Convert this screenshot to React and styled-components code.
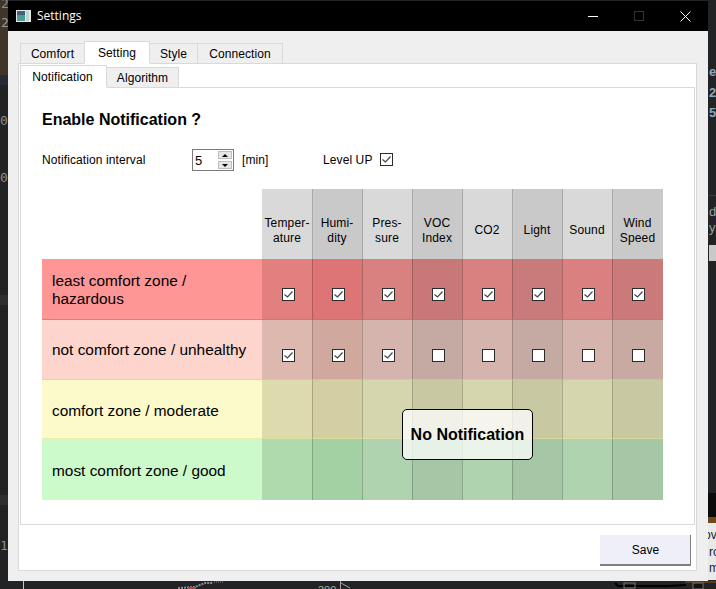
import React from "react";
import styled, { createGlobalStyle } from "styled-components";

const Global = createGlobalStyle`
  html, body { margin: 0; padding: 0; background: #212325; overflow: hidden; }
  body { font-family: "Liberation Sans", Arial, sans-serif; }
`;

const Desktop = styled.div`
  position: relative;
  width: 716px;
  height: 589px;
  box-sizing: border-box;
  padding: 1px 8px 8px;
  overflow: hidden;
  background: #212325;
`;
const BackPatch = styled.div`
  position: absolute;
  left: ${(p) => p.$x}px;
  top: ${(p) => p.$y}px;
  width: ${(p) => p.$w}px;
  height: ${(p) => p.$h}px;
  background: ${(p) => p.$bg};
`;
const BackGlyph = styled.span`
  position: absolute;
  left: ${(p) => p.$x}px;
  top: ${(p) => p.$y}px;
  font-family: ${(p) => (p.$mono ? '"DejaVu Sans Mono", monospace' : '"Liberation Sans", sans-serif')};
  font-size: ${(p) => p.$size || 13}px;
  font-weight: ${(p) => (p.$bold ? 700 : 400)};
  line-height: 14px;
  color: ${(p) => p.$color};
`;
const BottomArt = styled.svg`
  position: absolute;
  left: 0;
  top: 581px;
`;

const Window = styled.div`
  position: relative;
  width: 700px;
  height: 580px;
  display: flex;
  flex-direction: column;
`;
const TitleBar = styled.div`
  height: 30px;
  flex: none;
  background: #000;
  display: flex;
  align-items: center;
  padding-left: 8px;
  color: #fff;
  font-family: "Open Sans", sans-serif;
  font-size: 12px;
`;
const AppIcon = styled.svg`
  margin-right: 6px;
  flex: none;
`;
const TitleText = styled.span`
  flex: 1;
  padding-bottom: 2px;
`;
const WinButton = styled.div`
  width: 46px;
  height: 30px;
  display: flex;
  align-items: center;
  justify-content: center;
`;
const WinControls = styled.div`
  display: flex;
  margin-right: -1px;
  padding-right: 1px;
`;
const Body = styled.div`
  flex: 1;
  background: #efefef;
  padding: 10px 11px 10px 10px;
  display: flex;
  flex-direction: column;
`;
const TabRow = styled.div`
  display: flex;
  align-items: flex-end;
  flex: none;
  height: ${(p) => p.$h}px;
  margin-bottom: -1px;
  padding-left: ${(p) => p.$pad}px;
  position: relative;
  z-index: 1;
`;
const Tab = styled.div`
  box-sizing: border-box;
  width: ${(p) => p.$w}px;
  height: ${(p) => (p.$active ? p.$h : p.$h - 2)}px;
  margin-left: ${(p) => (p.$first ? 0 : -1)}px;
  padding-right: ${(p) => p.$nudge || 0}px;
  display: flex;
  align-items: center;
  justify-content: center;
  font-size: 12px;
  letter-spacing: 0.08px;
  color: #000;
  background: ${(p) => (p.$active ? "#fff" : "#efefef")};
  border: 1px solid #d9d9d9;
  border-bottom: ${(p) => (p.$active ? "1px solid #fff" : "1px solid #d9d9d9")};
  position: relative;
  z-index: ${(p) => (p.$active ? 2 : 1)};
`;
const OuterPane = styled.div`
  flex: 1;
  background: #fff;
  border: 1px solid #d9d9d9;
  padding: 1px;
  display: flex;
  flex-direction: column;
  min-height: 0;
`;
const InnerPane = styled.div`
  box-sizing: border-box;
  height: 438px;
  flex: none;
  background: #fff;
  border: 1px solid #d9d9d9;
  padding: 23px 0 0 21px;
`;
const Heading = styled.h1`
  margin: 0;
  font-size: 16px;
  line-height: 18px;
  font-weight: 700;
  color: #000;
`;
const OptionsRow = styled.div`
  margin-top: 20px;
  height: 22px;
  display: flex;
  align-items: center;
  font-size: 12px;
  letter-spacing: 0.1px;
  color: #000;
`;
const IntervalLabel = styled.span`
  width: 150px;
`;
const Spin = styled.div`
  box-sizing: border-box;
  width: 42px;
  height: 22px;
  border: 1px solid #7a7a7a;
  display: flex;
  align-items: center;
  justify-content: space-between;
  padding: 1px;
  background: #fff;
`;
const SpinValue = styled.span`
  font-size: 13px;
  padding-left: 1px;
`;
const SpinButtons = styled.div`
  display: flex;
  flex-direction: column;
  gap: 2px;
`;
const SpinButton = styled.div`
  box-sizing: border-box;
  width: 14px;
  height: 8px;
  background: #e6e6e6;
  border: 1px solid #bdbdbd;
  display: flex;
  align-items: center;
  justify-content: center;
  &::after {
    content: "";
    width: 0;
    height: 0;
    border-left: 3px solid transparent;
    border-right: 3px solid transparent;
    ${(p) => (p.$up ? "border-bottom: 3px solid #000;" : "border-top: 3px solid #000;")}
  }
`;
const Unit = styled.span`
  margin-left: 8px;
  width: 81px;
`;
const LevelLabel = styled.span`
  width: 57px;
`;
const LevelBox = styled.span`
  display: block;
  margin-top: -1px;
`;
const Box = styled.span`
  box-sizing: border-box;
  width: 13px;
  height: 13px;
  flex: none;
  display: block;
  background: #fff;
  border: 1px solid #2b2b2b;
`;
const CheckMark = styled.svg`
  display: block;
`;
const Table = styled.div`
  position: relative;
  margin-top: 18px;
  width: 621px;
  display: grid;
  grid-template-columns: 220px repeat(7, 50px) 51px;
  grid-template-rows: 70px 61px 60px 59px 61px;
`;
const Corner = styled.div``;
const HeadCell = styled.div`
  background: ${(p) => (p.$even ? "#c9c9c9" : "#d9d9d9")};
  box-shadow: ${(p) => (p.$first ? "none" : "inset 1px 0 0 #a9a9a9")};
  display: flex;
  align-items: center;
  justify-content: center;
  text-align: center;
  font-size: 12px;
  letter-spacing: 0.15px;
  line-height: 15px;
  padding-top: 13px;
  color: #000;
`;
const ZoneLabel = styled.div`
  background: ${(p) => p.$bg};
  box-shadow: inset 0 -1px 0 ${(p) => p.$edge};
  display: flex;
  align-items: center;
  padding-left: 10px;
  padding-top: ${(p) => p.$top}px;
  font-size: 15.4px;
  line-height: 18px;
  color: #000;
`;
const Cell = styled.div`
  box-sizing: border-box;
  background: ${(p) => p.$bg};
  box-shadow: inset 0 -1px 0 ${(p) => p.$edge}${(p) => (p.$first ? "" : ", inset 1px 0 0 rgba(0,0,0,0.2)")};
  padding: 29px 0 0 20px;
`;
const NoticeOverlay = styled.div`
  position: absolute;
  left: 360px;
  top: 220px;
  width: 131px;
  height: 51px;
  box-sizing: border-box;
  border: 1px solid #000;
  border-radius: 5px;
  background: rgba(255, 255, 255, 0.75);
  display: flex;
  align-items: center;
  justify-content: center;
  font-size: 16px;
  font-weight: 700;
  color: #000;
`;
const Footer = styled.div`
  flex: 1;
  display: flex;
  justify-content: flex-end;
  align-items: flex-start;
  padding: 10px 4px 0 0;
`;
const SaveButton = styled.div`
  box-sizing: border-box;
  width: 91px;
  height: 31px;
  padding: 1px 0 0 1px;
  background: #efeff9;
  border-right: 1px solid #808080;
  border-bottom: 2px solid #808080;
  display: flex;
  align-items: center;
  justify-content: center;
  font-size: 12px;
  color: #000;
`;

const Check = ({ on }) => (
  <Box>
    {on && (
      <CheckMark width="11" height="11" viewBox="0 0 11 11">
        <path d="M1.5 5.5 L4.5 8 L9.5 2.5" fill="none" stroke="#444" strokeWidth="1.2" />
      </CheckMark>
    )}
  </Box>
);

const headers = [
  ["Temper-", "ature"],
  ["Humi-", "dity"],
  ["Pres-", "sure"],
  ["VOC", "Index"],
  ["CO2"],
  ["Light"],
  ["Sound"],
  ["Wind", "Speed"],
];

const zones = [
  {
    label: ["least comfort zone /", "hazardous"],
    bg: "#ff9696",
    edge: "rgba(235,90,90,0.55)",
    top: 0,
    cells: ["#e28080", "#dd7476", "#d98080", "#c97878", "#d98080", "#c97a7a", "#da8080", "#cb7a7a"],
    checks: [1, 1, 1, 1, 1, 1, 1, 1],
  },
  {
    label: ["not comfort zone / unhealthy"],
    bg: "#fdd5cc",
    edge: "rgba(240,200,120,0.6)",
    top: 0,
    cells: ["#dcb8ae", "#d0a89e", "#d4b4ac", "#c4aaa2", "#d4b4ac", "#c4aaa2", "#d4b4ac", "#c8aaa2"],
    checks: [1, 1, 1, 0, 0, 0, 0, 0],
  },
  {
    label: ["comfort zone / moderate"],
    bg: "#fcf9cb",
    edge: "rgba(220,230,150,0.6)",
    top: 2,
    cells: ["#dddaae", "#d3cfa2", "#d6d6ae", "#c8c8a2", "#d6d6ae", "#c8c8a2", "#d6d6ae", "#c8c8a2"],
  },
  {
    label: ["most comfort zone / good"],
    bg: "#cdfacb",
    edge: "transparent",
    top: 2,
    cells: ["#aedaae", "#a3d1a3", "#afd3af", "#a5c7a5", "#afd3af", "#a5c7a5", "#afd3af", "#a5c7a5"],
  },
];

const outerTabs = [
  ["Comfort", 65],
  ["Setting", 66, true],
  ["Style", 49],
  ["Connection", 86],
];
const innerTabs = [
  ["Notification", 87, true, 2],
  ["Algorithm", 73],
];

export default function App() {
  return (
    <Desktop>
      <Global />
      <BackPatch $x={0} $y={0} $w={8} $h={75} $bg="#3f3529" />
      <BackPatch $x={0} $y={75} $w={8} $h={10} $bg="#272b33" />
      <BackPatch $x={0} $y={295} $w={8} $h={10} $bg="#2c2e30" />
      <BackPatch $x={0} $y={495} $w={8} $h={10} $bg="#2c2e30" />
      <BackPatch $x={708} $y={195} $w={8} $h={1} $bg="#3a3c3e" />
      <BackPatch $x={709} $y={245} $w={7} $h={16} $bg="#c9c9c9" />
      <BackPatch $x={708} $y={493} $w={8} $h={24} $bg="#0b0b0b" />
      <BackPatch $x={708} $y={517} $w={8} $h={6} $bg="#6b4a20" />
      <BackPatch $x={708} $y={523} $w={8} $h={57} $bg="#e9e9e9" />
      <BackGlyph $x={1} $y={-3} $color="#8d8d84" $mono>2</BackGlyph>
      <BackGlyph $x={1} $y={16} $color="#9a9a90" $mono>2</BackGlyph>
      <BackGlyph $x={0} $y={114} $color="#8d8d8d" $mono>0</BackGlyph>
      <BackGlyph $x={0} $y={171} $color="#8d8d8d" $mono>0</BackGlyph>
      <BackGlyph $x={0} $y={539} $color="#8d8d8d" $mono>1</BackGlyph>
      <BackGlyph $x={709} $y={65} $color="#8fa6bf" $bold>e</BackGlyph>
      <BackGlyph $x={709} $y={86} $color="#8fa6bf" $bold>2</BackGlyph>
      <BackGlyph $x={709} $y={106} $color="#8fa6bf" $bold>5</BackGlyph>
      <BackGlyph $x={709} $y={205} $color="#9aa0a6">d</BackGlyph>
      <BackGlyph $x={709} $y={221} $color="#9aa0a6">y</BackGlyph>
      <BackGlyph $x={704} $y={528} $color="#222" $size={12}>ov</BackGlyph>
      <BackGlyph $x={709} $y={545} $color="#222" $size={12}>ro</BackGlyph>
      <BackGlyph $x={709} $y={561} $color="#222" $size={12}>m</BackGlyph>
      <BottomArt width="716" height="8" viewBox="0 0 716 8">
        <path d="M23.5 0V8" stroke="#c8c8c8" />
        <path d="M178 7L195 6L205 2H213" stroke="#8f8a9a" strokeWidth="2" strokeDasharray="2 1" fill="none" />
        <path d="M214 1H223" stroke="#8f8a9a" strokeDasharray="1 1" />
        <path d="M188 7h8" stroke="#c83a4a" strokeWidth="2" />
        <path d="M340.5 0V8M341 2l9 5" stroke="#a89aa8" fill="none" />
        <path d="M615 2l3 3h50l18-1" stroke="#000" strokeWidth="2" fill="none" />
        <rect x="624" y="2" width="11" height="5" fill="none" stroke="#777" />
        <path d="M685 1h31" stroke="#5a3a18" strokeWidth="2" />
        <rect x="693" y="2" width="10" height="6" fill="#111" stroke="#777" />
      </BottomArt>
      <BackGlyph $x={318} $y={583} $color="#a9a9a9" $size={11}>300</BackGlyph>
      <Window>
        <TitleBar>
          <AppIcon width="15" height="12" viewBox="0 0 15 12">
            <rect width="15" height="12" fill="#e3e8e8" />
            <rect x="1" y="1" width="8" height="10" fill="#4f9a94" />
            <rect x="1" y="1" width="8" height="4" fill="#40627c" />
            <rect x="10" y="1" width="3" height="10" fill="#bcd8c8" />
          </AppIcon>
          <TitleText>Settings</TitleText>
          <WinControls>
            <WinButton>
              <svg width="10" height="10" viewBox="0 0 10 10">
                <path d="M0 5.5H10" stroke="#fff" />
              </svg>
            </WinButton>
            <WinButton>
              <svg width="10" height="10" viewBox="0 0 10 10">
                <rect x="0.5" y="0.5" width="9" height="9" fill="none" stroke="#333" />
              </svg>
            </WinButton>
            <WinButton>
              <svg width="11" height="11" viewBox="0 0 11 11">
                <path d="M0.5 0.5L10.5 10.5M10.5 0.5L0.5 10.5" stroke="#fff" />
              </svg>
            </WinButton>
          </WinControls>
        </TitleBar>
        <Body>
          <TabRow $h={23} $pad={2}>
            {outerTabs.map(([t, w, a], i) => (
              <Tab key={t} $w={w} $h={23} $active={a} $first={i === 0}>
                {t}
              </Tab>
            ))}
          </TabRow>
          <OuterPane>
            <TabRow $h={23} $pad={0}>
              {innerTabs.map(([t, w, a, n], i) => (
                <Tab key={t} $w={w} $h={23} $active={a} $first={i === 0} $nudge={n}>
                  {t}
                </Tab>
              ))}
            </TabRow>
            <InnerPane>
              <Heading>Enable Notification ?</Heading>
              <OptionsRow>
                <IntervalLabel>Notification interval</IntervalLabel>
                <Spin>
                  <SpinValue>5</SpinValue>
                  <SpinButtons>
                    <SpinButton $up />
                    <SpinButton />
                  </SpinButtons>
                </Spin>
                <Unit>[min]</Unit>
                <LevelLabel>Level UP</LevelLabel>
                <LevelBox>
                  <Check on />
                </LevelBox>
              </OptionsRow>
              <Table>
                <Corner />
                {headers.map((lines, i) => (
                  <HeadCell key={lines[0]} $even={i % 2 === 1} $first={i === 0}>
                    <span>
                      {lines.map((l, k) => (
                        <React.Fragment key={l}>
                          {k > 0 && <br />}
                          {l}
                        </React.Fragment>
                      ))}
                    </span>
                  </HeadCell>
                ))}
                {zones.map((z) => (
                  <React.Fragment key={z.bg}>
                    <ZoneLabel $bg={z.bg} $edge={z.edge} $top={z.top}>
                      <span>
                        {z.label.map((l, k) => (
                          <React.Fragment key={l}>
                            {k > 0 && <br />}
                            {l}
                          </React.Fragment>
                        ))}
                      </span>
                    </ZoneLabel>
                    {z.cells.map((c, i) => (
                      <Cell key={i} $bg={c} $edge={z.edge} $first={i === 0}>
                        {z.checks && <Check on={!!z.checks[i]} />}
                      </Cell>
                    ))}
                  </React.Fragment>
                ))}
                <NoticeOverlay>No Notification</NoticeOverlay>
              </Table>
            </InnerPane>
            <Footer>
              <SaveButton>Save</SaveButton>
            </Footer>
          </OuterPane>
        </Body>
      </Window>
    </Desktop>
  );
}
